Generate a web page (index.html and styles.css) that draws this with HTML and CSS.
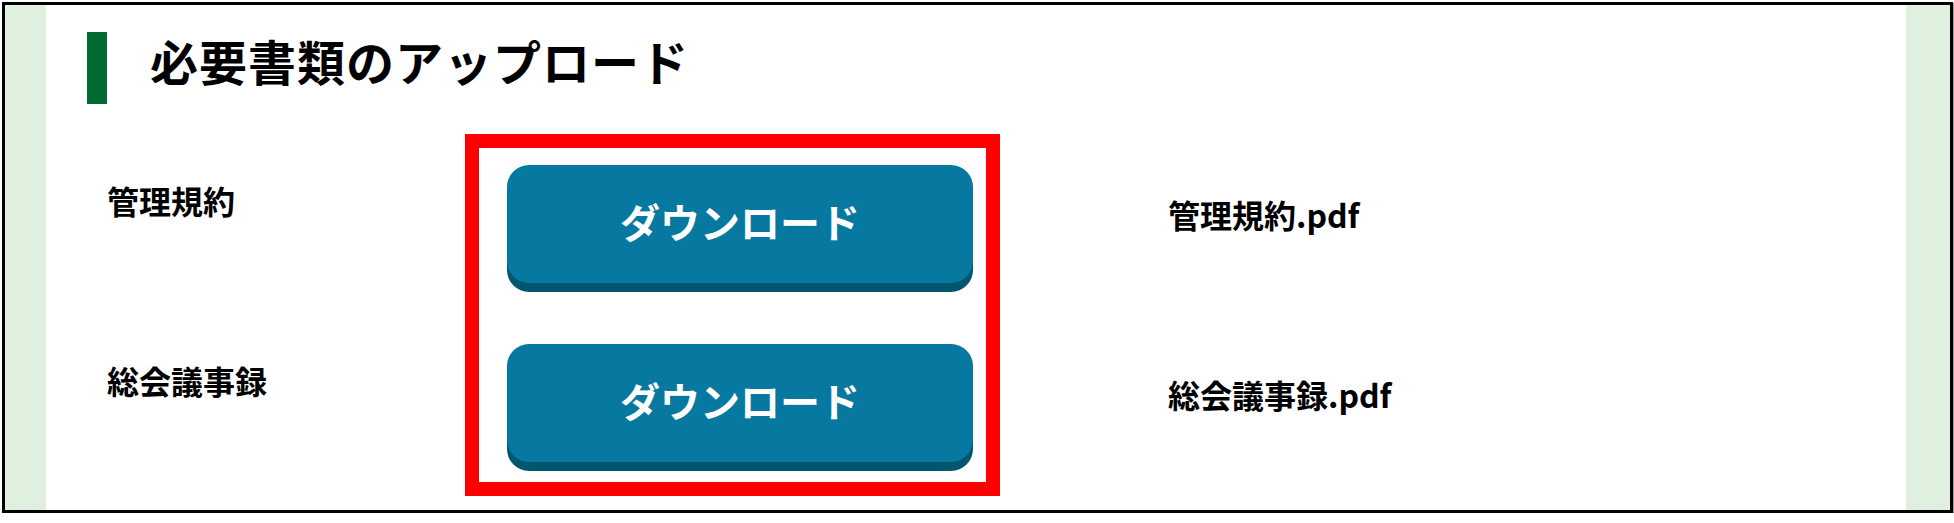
FILE: index.html
```html
<!DOCTYPE html>
<html>
<head>
    <title>必要書類のアップロード</title>
    <meta charset="utf-8">
    <meta name="viewport" content="width=device-width, initial-scale=1">
    <link rel="stylesheet" href="styles.css">
</head>
<body>
    <div class="frame">
        <div class="side-band"></div>

        <div class="main">
            <div class="heading">
                <div class="heading-bar"></div>
                <h2 class="heading-text">必要書類のアップロード</h2>
            </div>

            <div class="upload-area">
                <div class="labels">
                    <p class="doc-label">管理規約</p>
                    <p class="doc-label">総会議事録</p>
                </div>

                <div class="button-box">
                    <button class="download-button">ダウンロード</button>
                    <button class="download-button">ダウンロード</button>
                </div>

                <div class="files">
                    <p class="file-name">管理規約.pdf</p>
                    <p class="file-name">総会議事録.pdf</p>
                </div>
            </div>
        </div>

        <div class="side-band side-band-right"></div>
    </div>
</body>
</html>
```

FILE: styles.css
```css
body {
    font-family: "Noto Sans CJK JP", "Noto Sans", sans-serif;
    background-color: #fff;
    color: #000;
    margin: 0;
    padding: 0;
    overflow: hidden;
}

.frame {
    display: flex;
    width: 1951px;
    height: 511px;
    margin: 2px 0 0 2px;
    border: 3px solid #000;
    box-sizing: border-box;
    box-shadow: 1px 1px 0 #9a9a9a;
}

.side-band {
    width: 41px;
    background-color: #dff0de;
}

.side-band-right {
    width: 44px;
}

.main {
    flex: 1;
    background-color: #fff;
}

.heading {
    display: flex;
    align-items: flex-start;
    padding: 27px 0 0 41px;
}

.heading-bar {
    width: 20px;
    height: 72px;
    background-color: #006a32;
}

.heading-text {
    margin: -2px 0 0 43px;
    font-size: 48px;
    line-height: 60px;
    font-weight: 700;
    letter-spacing: 1px;
}

.upload-area {
    display: flex;
    align-items: flex-start;
    margin-top: 30px;
    padding-left: 61px;
}

.labels, .files {
    display: flex;
    flex-direction: column;
    gap: 140px;
}

.labels {
    width: 358px;
    padding-top: 46px;
}

.doc-label, .file-name {
    margin: 0;
    font-size: 32px;
    line-height: 40px;
    font-weight: 700;
}

.button-box {
    display: flex;
    flex-direction: column;
    gap: 61px;
    width: 535px;
    box-sizing: border-box;
    border: 14px solid #ff0000;
    padding: 17px 13px 20px 28px;
}

.download-button {
    height: 118px;
    border: none;
    border-radius: 22px;
    background-color: #0779a1;
    box-shadow: 0 9px 0 #00566f;
    color: #fff;
    font-family: "Noto Sans CJK JP", "Noto Sans", sans-serif;
    font-size: 40px;
    font-weight: 700;
    padding: 0 0 6px 0;
    cursor: pointer;
}

.files {
    margin-left: 168px;
    padding-top: 60px;
}
```
